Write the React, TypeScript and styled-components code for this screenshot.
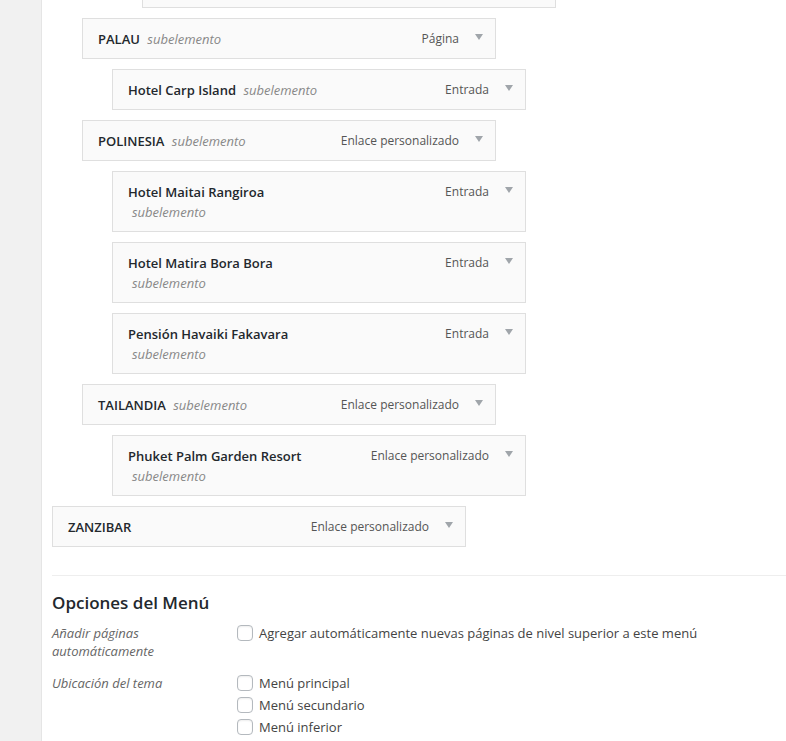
import styled, { createGlobalStyle } from 'styled-components';

const GlobalStyle = createGlobalStyle`
  html, body {
    margin: 0;
    padding: 0;
    background: #fff;
    font-family: 'Open Sans', 'Liberation Sans', sans-serif;
    color: #444;
    overflow: hidden;
  }
`;

const Page = styled.div`
  display: flex;
  min-height: 741px;
`;

const Sidebar = styled.div`
  flex: none;
  width: 41px;
  background: #f1f1f1;
  border-right: 1px solid #e5e5e5;
`;

const Content = styled.div`
  flex: 1;
  padding-left: 10px;
  overflow: hidden;
`;

const MenuList = styled.div`
  display: flex;
  flex-direction: column;
  gap: 10px;
  margin-top: -33px;
`;

const Item = styled.div<{ $depth: number }>`
  box-sizing: border-box;
  width: 414px;
  min-height: 41px;
  margin-left: ${(p) => p.$depth * 30}px;
  padding: 10px 12px 9px 15px;
  display: flex;
  justify-content: space-between;
  align-items: flex-start;
  background: #fafafa;
  border: 1px solid #dfdfdf;
  font-size: 13px;
  line-height: 20px;
`;

const Title = styled.div`
  max-width: 212px;
  color: #23282d;
  font-weight: 600;
`;

const Sub = styled.span`
  margin-left: 4px;
  color: #888;
  font-weight: 400;
  font-style: italic;
`;

const Controls = styled.div`
  display: flex;
  align-items: center;
  gap: 16px;
  height: 19px;
  font-size: 12px;
  color: #555;
`;

const Arrow = styled.span`
  width: 0;
  height: 0;
  margin-top: -3px;
  border-left: 4px solid transparent;
  border-right: 4px solid transparent;
  border-top: 6px solid #a0a5aa;
`;

const Separator = styled.div`
  margin-top: 28px;
  border-top: 1px solid #eee;
`;

const Heading = styled.h3`
  margin: 15px 0 0;
  font-size: 17px;
  line-height: 24px;
  font-weight: 600;
  color: #23282d;
`;

const Settings = styled.div`
  display: grid;
  grid-template-columns: 185px 1fr;
  row-gap: 14px;
  margin-top: 9px;
  font-size: 13px;
`;

const Label = styled.div`
  width: 150px;
  line-height: 18px;
  font-style: italic;
  color: #666;
`;

const Options = styled.div`
  display: flex;
  flex-direction: column;
  margin-top: -2px;
`;

const Option = styled.label`
  display: flex;
  align-items: center;
  gap: 6px;
  height: 22px;
  color: #444;
`;

const Box = styled.span`
  box-sizing: border-box;
  width: 16px;
  height: 16px;
  border: 1px solid #b4b9be;
  border-radius: 4px;
  background: #fff;
  box-shadow: inset 0 1px 2px rgba(0, 0, 0, 0.07);
`;

type MenuEntry = { title: string; type: string; depth: number; sub?: boolean };

const items: MenuEntry[] = [
  { title: 'PALAU', type: 'Página', depth: 1, sub: true },
  { title: 'Hotel Carp Island', type: 'Entrada', depth: 2, sub: true },
  { title: 'POLINESIA', type: 'Enlace personalizado', depth: 1, sub: true },
  { title: 'Hotel Maitai Rangiroa', type: 'Entrada', depth: 2, sub: true },
  { title: 'Hotel Matira Bora Bora', type: 'Entrada', depth: 2, sub: true },
  { title: 'Pensión Havaiki Fakavara', type: 'Entrada', depth: 2, sub: true },
  { title: 'TAILANDIA', type: 'Enlace personalizado', depth: 1, sub: true },
  { title: 'Phuket Palm Garden Resort', type: 'Enlace personalizado', depth: 2, sub: true },
  { title: 'ZANZIBAR', type: 'Enlace personalizado', depth: 0 },
];

const MenuItem = ({ item }: { item: MenuEntry }) => (
  <Item $depth={item.depth}>
    <Title>
      {item.title} {item.sub && <Sub>subelemento</Sub>}
    </Title>
    <Controls>
      <span>{item.type}</span>
      <Arrow />
    </Controls>
  </Item>
);

export default function App() {
  return (
    <>
      <GlobalStyle />
      <Page>
        <Sidebar />
        <Content>
          <MenuList>
            <Item $depth={3} />
            {items.map((item) => (
              <MenuItem key={item.title} item={item} />
            ))}
          </MenuList>
          <Separator />
          <Heading>Opciones del Menú</Heading>
          <Settings>
            <Label>Añadir páginas automáticamente</Label>
            <Options>
              <Option>
                <Box />
                Agregar automáticamente nuevas páginas de nivel superior a este menú
              </Option>
            </Options>
            <Label>Ubicación del tema</Label>
            <Options>
              <Option>
                <Box />
                Menú principal
              </Option>
              <Option>
                <Box />
                Menú secundario
              </Option>
              <Option>
                <Box />
                Menú inferior
              </Option>
            </Options>
          </Settings>
        </Content>
      </Page>
    </>
  );
}
